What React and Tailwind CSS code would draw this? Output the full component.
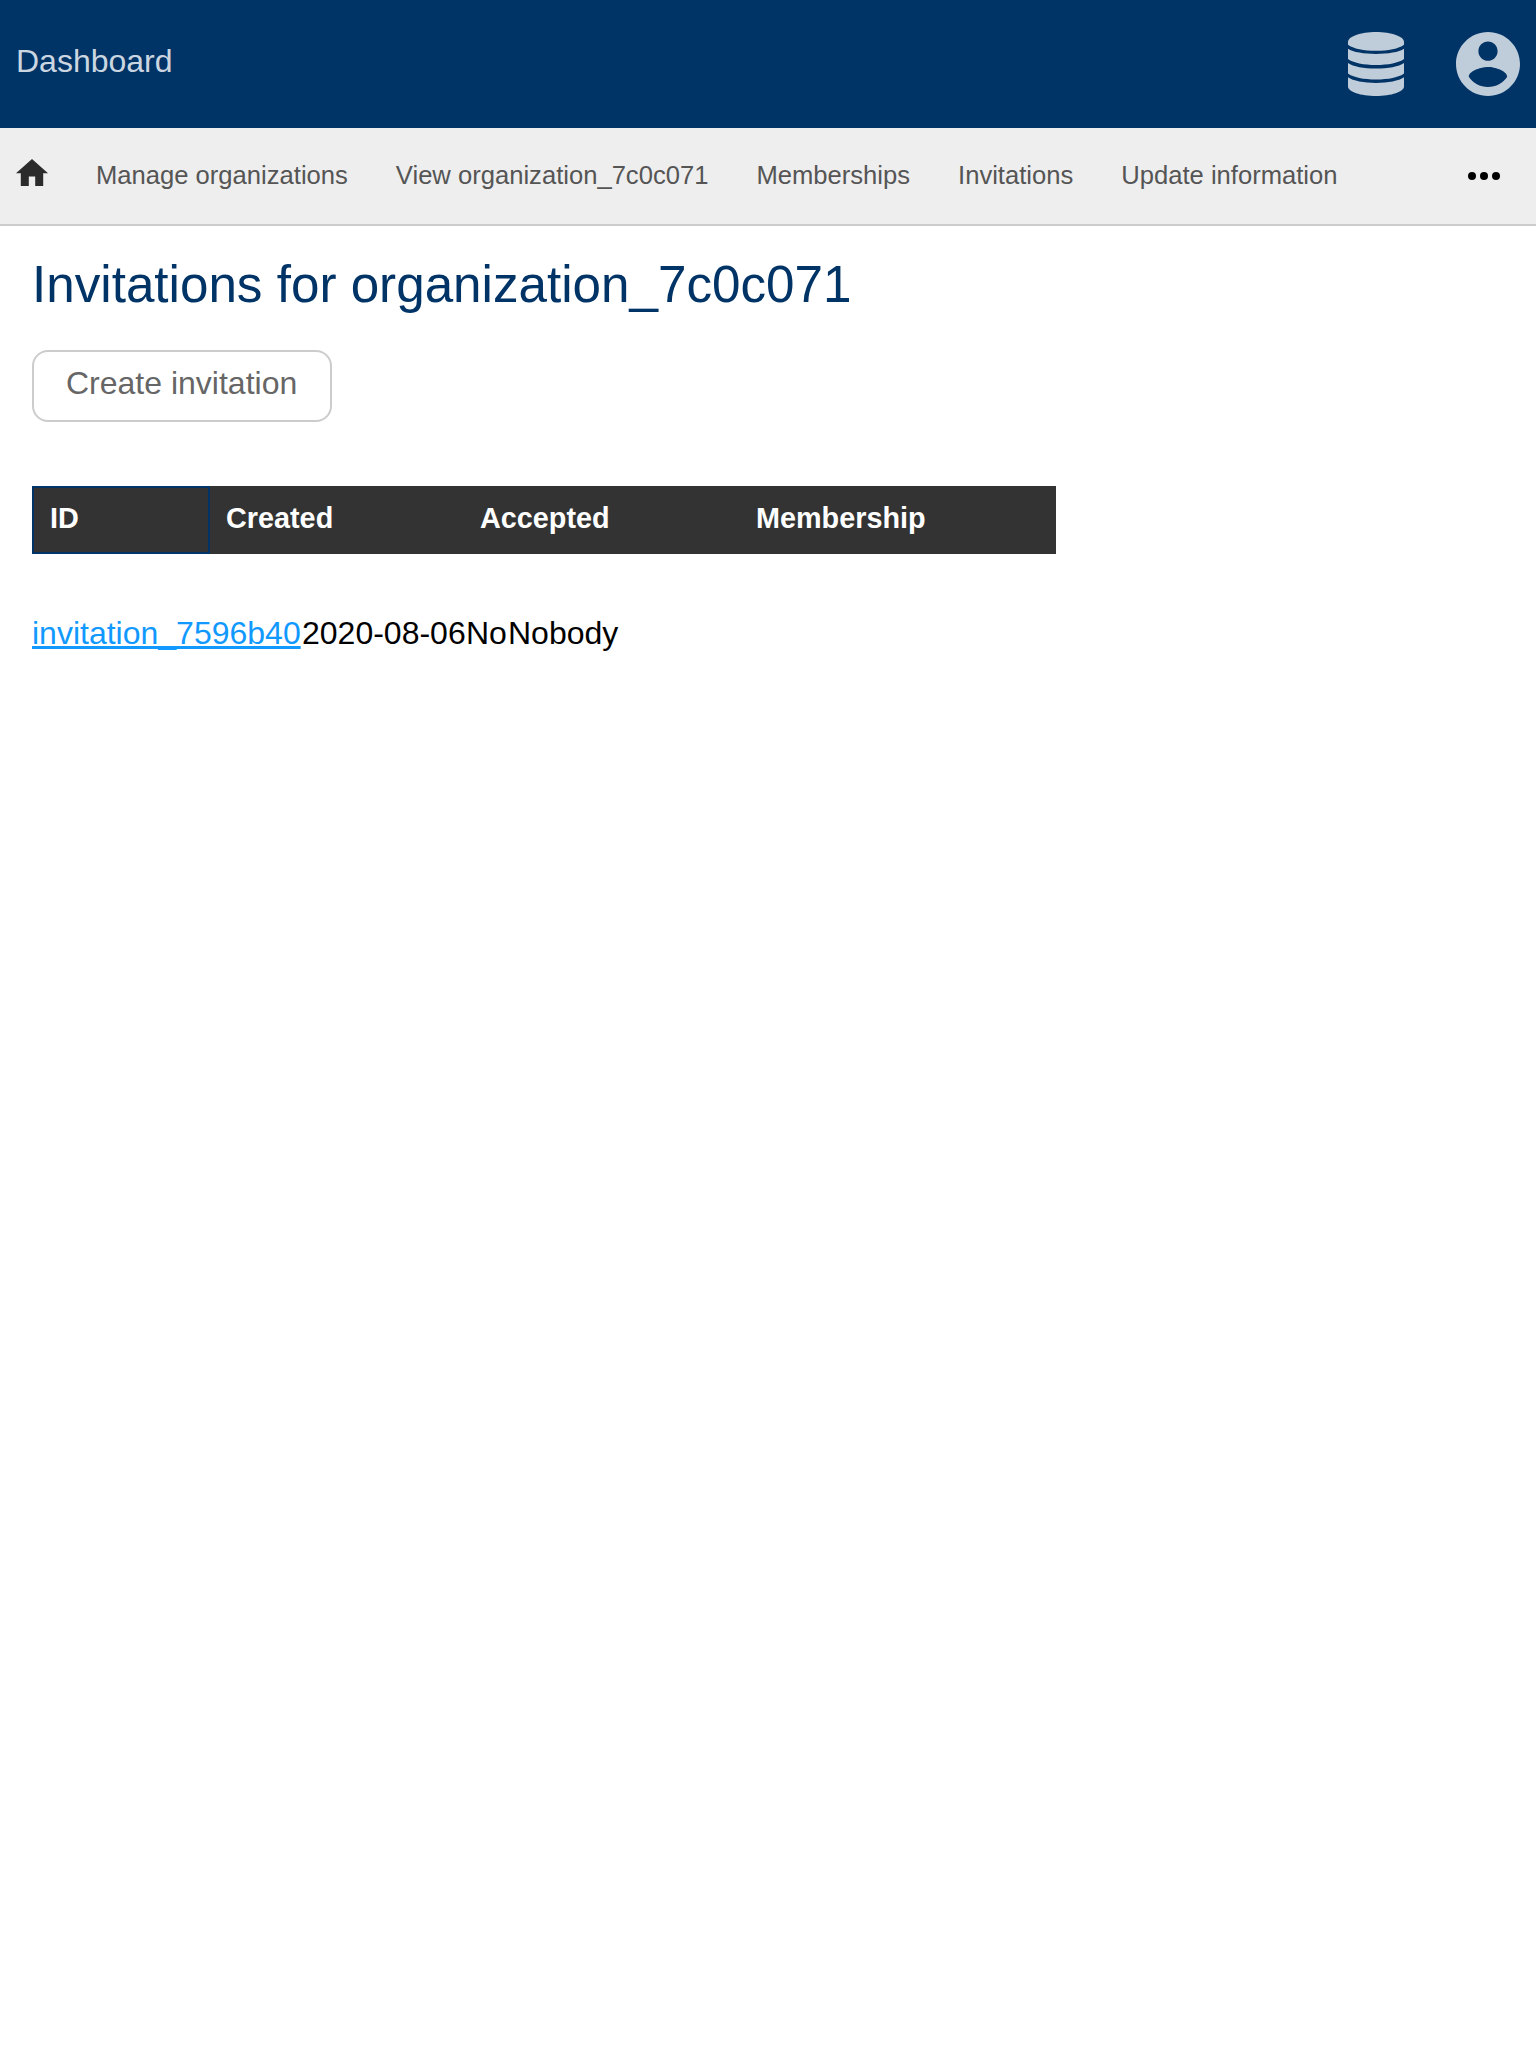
const navItems = [
  "Manage organizations",
  "View organization_7c0c071",
  "Memberships",
  "Invitations",
  "Update information",
];

function HomeIcon() {
  return (
    <svg className="block h-[27px] w-8" viewBox="2 3 20 17" preserveAspectRatio="none" fill="#2b2b2b">
      <path d="M10 20v-6h4v6h5v-8h3L12 3 2 12h3v8z" />
    </svg>
  );
}

function DatabaseIcon() {
  return (
    <svg className="block h-16 w-14" viewBox="0 0 56 64" fill="currentColor">
      <path d="M0 10C0 4.500 12.500 0 28 0s28 4.500 28 10v2.700c-5 3.900-16 6.100-28 6.100S5 16.600 0 12.700z" />
      <path d="M0 16.700c5 3.400 16 5.200 28 5.200s23-1.800 28-5.200v10.300c-5 3.900-16 6-28 6S5 30.900 0 27z" />
      <path d="M0 31c5 3.600 16 5.600 28 5.600s23-2 28-5.600v10.400c-5 3.900-16 6-28 6S5 45.300 0 41.400z" />
      <path d="M0 45.300c5 3.600 16 5.600 28 5.600s23-2 28-5.600V54.500c0 5.300-12.500 9.500-28 9.500S0 59.800 0 54.500z" />
    </svg>
  );
}

function AccountIcon() {
  return (
    <svg className="block size-16" viewBox="2 2 20 20" fill="currentColor">
      <path d="M12 2C6.480 2 2 6.480 2 12s4.480 10 10 10 10-4.480 10-10S17.520 2 12 2zm0 3c1.660 0 3 1.340 3 3s-1.340 3-3 3-3-1.340-3-3 1.340-3 3-3zm0 14.200c-2.500 0-4.710-1.280-6-3.220.030-1.990 4-3.080 6-3.080 1.990 0 5.970 1.090 6 3.080-1.290 1.940-3.500 3.220-6 3.220z" />
    </svg>
  );
}

export default function App() {
  return (
    <div className="min-h-[2048px] bg-white font-['Liberation_Sans',sans-serif] text-[32px] leading-[40px] text-black">
      <header className="flex h-32 items-center justify-between bg-[#003366] px-4 text-[#bfccd9]">
        <a className="-mt-1.5 text-[#ccd6e0]">Dashboard</a>
        <div className="flex gap-[52px]">
          <DatabaseIcon />
          <AccountIcon />
        </div>
      </header>
      <nav className="flex h-[98px] items-center gap-12 border-b-2 border-[#cccccc] bg-[#eeeeee] px-4 text-[25.6px] text-[#555555]">
        <div className="-mt-2"><HomeIcon /></div>
        {navItems.map((item) => (
          <a key={item} className="-mt-0.5 whitespace-nowrap">{item}</a>
        ))}
        <svg className="mr-5 ml-auto block h-2 w-8" viewBox="0 0 32 8" fill="#000">
          <circle cx="4" cy="4" r="4" />
          <circle cx="16" cy="4" r="4" />
          <circle cx="28" cy="4" r="4" />
        </svg>
      </nav>
      <main className="px-8 pt-[27px]">
        <h1 className="text-[51.2px] leading-[64px] text-[#003366]">Invitations for organization_7c0c071</h1>
        <button className="mt-[33px] flex h-[72px] w-[300px] rounded-2xl border-2 border-[#cccccc] pt-[11px] pl-8 whitespace-nowrap text-[#666666]">
          Create invitation
        </button>
        <div className="mt-16 flex h-[68px] w-[1024px] bg-[#333333] text-[28.8px] font-bold text-white">
          <div className="w-[178px] border-2 border-[#003366] px-4 pt-[10px]">ID</div>
          <div className="w-[254px] px-4 pt-3">Created</div>
          <div className="w-[276px] px-4 pt-3">Accepted</div>
          <div className="px-4 pt-3">Membership</div>
        </div>
        <div className="mt-[59px] grid grid-cols-[270px_164px_42px_auto]">
          <div><a className="text-[#1199ff] underline">invitation_7596b40</a></div>
          <div>2020-08-06</div>
          <div>No</div>
          <div>Nobody</div>
        </div>
      </main>
    </div>
  );
}
